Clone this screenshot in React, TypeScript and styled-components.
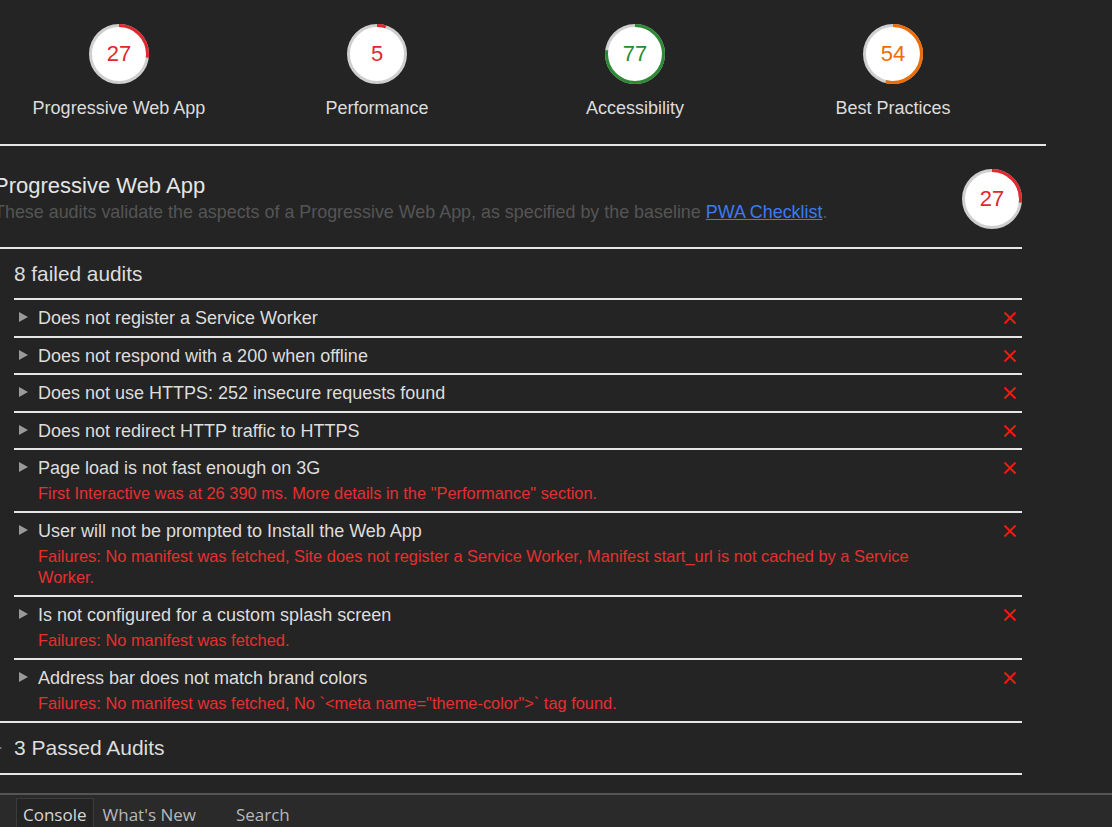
import React from 'react'
import styled, { createGlobalStyle } from 'styled-components'

const GlobalStyle = createGlobalStyle`
	html, body {
		margin: 0;
		padding: 0;
		background: #242424;
		overflow: hidden;
	}
	body {
		font-family: 'Liberation Sans', Arial, sans-serif;
		color: #ddd;
	}
`

type GaugeProps = { score: number; size?: number }

const scoreColor = (score: number) => {
	if (score >= 75) return '#2c8a34'
	if (score >= 45) return '#ef6c00'
	return '#e0282f'
}

const Gauge: React.FC<GaugeProps> = ({ score, size = 60 }) => {
	const r = 28.5
	const circ = 2 * Math.PI * r
	const color = scoreColor(score)
	return (
		<GaugeBox>
			<svg width={size} height={size} viewBox="0 0 60 60">
				<circle cx="30" cy="30" r={r} fill="#fff" stroke="#cfcfcf" strokeWidth="3" />
				<circle
					cx="30"
					cy="30"
					r={r}
					fill="none"
					stroke={color}
					strokeWidth="3"
					strokeDasharray={`${(circ * score) / 100} ${circ}`}
					transform="rotate(-90 30 30)"
				/>
			</svg>
			<GaugeValue $color={color}>{score}</GaugeValue>
		</GaugeBox>
	)
}

const categories = [
	{ score: 27, label: 'Progressive Web App' },
	{ score: 5, label: 'Performance' },
	{ score: 77, label: 'Accessibility' },
	{ score: 54, label: 'Best Practices' },
]

const failed = [
	{ title: 'Does not register a Service Worker' },
	{ title: 'Does not respond with a 200 when offline' },
	{ title: 'Does not use HTTPS: 252 insecure requests found' },
	{ title: 'Does not redirect HTTP traffic to HTTPS' },
	{
		title: 'Page load is not fast enough on 3G',
		detail: 'First Interactive was at 26\u00a0390\u00a0ms. More details in the "Performance" section.',
	},
	{
		title: 'User will not be prompted to Install the Web App',
		detail:
			'Failures: No manifest was fetched, Site does not register a Service Worker, Manifest start_url is not cached by a Service Worker.',
	},
	{
		title: 'Is not configured for a custom splash screen',
		detail: 'Failures: No manifest was fetched.',
	},
	{
		title: 'Address bar does not match brand colors',
		detail: 'Failures: No manifest was fetched, No `<meta name="theme-color">` tag found.',
	},
]

const FailIcon = () => (
	<FailMark width="14" height="14" viewBox="0 0 14 14">
		<path d="M1.5 1.5 L12.5 12.5 M12.5 1.5 L1.5 12.5" stroke="#f21b0f" strokeWidth="2" />
	</FailMark>
)

export default function App() {
	return (
		<Page>
			<GlobalStyle />
			<Report>
				<ScoreRow>
					{categories.map(c => (
						<ScoreItem key={c.label}>
							<Gauge score={c.score} />
							<ScoreLabel>{c.label}</ScoreLabel>
						</ScoreItem>
					))}
				</ScoreRow>
				<Section>
					<SectionHeader>
						<div>
							<SectionTitle>Progressive Web App</SectionTitle>
							<SectionDesc>
								These audits validate the aspects of a Progressive Web App, as specified by the
								baseline <a href="#">PWA Checklist</a>.
							</SectionDesc>
						</div>
						<Gauge score={27} />
					</SectionHeader>
					<Group>
						<GroupHeader>8 failed audits</GroupHeader>
						{failed.map(a => (
							<AuditRow key={a.title}>
								<Arrow />
								<div>
									<AuditTitle>{a.title}</AuditTitle>
									{a.detail && <AuditDetail>{a.detail}</AuditDetail>}
								</div>
								<FailIcon />
							</AuditRow>
						))}
					</Group>
					<Group>
						<GroupHeader $wide>
							<PassedArrow />3 Passed Audits
						</GroupHeader>
					</Group>
				</Section>
			</Report>
			<Drawer>
				<Tab $active>Console</Tab>
				<Tab>What's New</Tab>
				<Tab>Search</Tab>
			</Drawer>
		</Page>
	)
}

const Page = styled.div`
	height: 827px;
	display: flex;
	flex-direction: column;
`

const Report = styled.div`
	flex: 1;
	width: 1046px;
`

const ScoreRow = styled.div`
	display: grid;
	grid-template-columns: repeat(4, 238px);
	column-gap: 20px;
	padding: 24px 0 24px;
	border-bottom: 2px solid #e6e6e6;
`

const ScoreItem = styled.div`
	display: flex;
	flex-direction: column;
	align-items: center;
`

const ScoreLabel = styled.div`
	margin-top: 12px;
	font-size: 18px;
	line-height: 24px;
	color: #dcdcdc;
`

const GaugeBox = styled.div`
	position: relative;
	width: 60px;
	height: 60px;
	svg {
		display: block;
	}
`

const GaugeValue = styled.div<{ $color: string }>`
	position: absolute;
	inset: 0;
	display: flex;
	align-items: center;
	justify-content: center;
	font-size: 22px;
	color: ${p => p.$color};
`

const Section = styled.div`
	width: 1022px;
`

const SectionHeader = styled.div`
	display: flex;
	justify-content: space-between;
	align-items: flex-start;
	padding: 23px 0 0;
	height: 78px;
	margin-left: -6px;
`

const SectionTitle = styled.div`
	margin-top: 4px;
	font-size: 22px;
	line-height: 26px;
	color: #e4e4e4;
`

const SectionDesc = styled.div`
	font-size: 17.9px;
	line-height: 26px;
	color: #555;
	a {
		color: #3a7cf5;
	}
`

const Group = styled.div`
	border-top: 2px solid #e6e6e6;
	&:last-child {
		border-bottom: 2px solid #e6e6e6;
	}
`

const GroupHeader = styled.div<{ $wide?: boolean }>`
	position: relative;
	padding: ${p => (p.$wide ? '12px 0 12px 14px' : '11.5px 0 11.5px 14px')};
	font-size: ${p => (p.$wide ? '21px' : '20.8px')};
	line-height: 26px;
	color: #ddd;
`

const AuditRow = styled.div`
	display: grid;
	grid-template-columns: 24px 1fr auto;
	align-items: start;
	margin-left: 14px;
	padding: 8px 5px 7.5px 0;
	border-top: 2px solid #e6e6e6;
`

const Arrow = styled.div`
	width: 0;
	height: 0;
	margin: 4px 0 0 5px;
	border-left: 9px solid #9a9a9a;
	border-top: 5.5px solid transparent;
	border-bottom: 5.5px solid transparent;
`

const PassedArrow = styled(Arrow)`
	position: absolute;
	left: -7px;
	top: 20px;
	margin: 0;
`

const FailMark = styled.svg`
	margin-top: 3px;
`

const AuditTitle = styled.div`
	font-size: 18px;
	line-height: 20px;
	color: #ddd;
`

const AuditDetail = styled.div`
	max-width: 900px;
	margin-top: 4.5px;
	font-size: 16.4px;
	line-height: 21px;
	color: #e53030;
`

const Drawer = styled.div`
	height: 32px;
	display: flex;
	align-items: flex-end;
	padding-left: 16px;
	background: #2a2a2a;
	border-top: 2px solid #555;
	font-family: 'Open Sans', 'Noto Sans', sans-serif;
`

const Tab = styled.div<{ $active?: boolean }>`
	height: 28px;
	padding: 0 6px;
	margin-right: ${p => (p.$active ? '2px' : '26px')};
	font-size: 17px;
	line-height: 32px;
	color: ${p => (p.$active ? '#d6d6d6' : '#b8b8b8')};
	background: ${p => (p.$active ? '#242424' : 'transparent')};
	border: 1px solid ${p => (p.$active ? '#3c3c3c' : 'transparent')};
	border-bottom: none;
	overflow: hidden;
`
